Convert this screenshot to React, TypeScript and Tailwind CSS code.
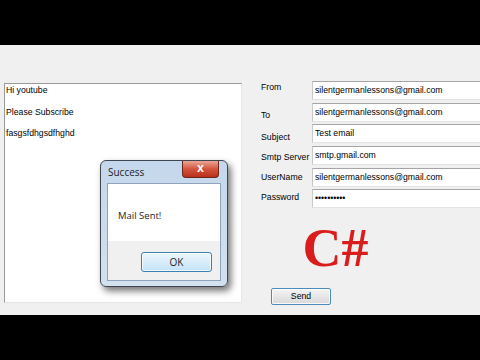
import React from 'react'

const fields = [
  { label: 'From', value: 'silentgermanlessons@gmail.com', mt: 'mt-0' },
  { label: 'To', value: 'silentgermanlessons@gmail.com', mt: 'mt-[6px]' },
  { label: 'Subject', value: 'Test email', mt: 'mt-[6.5px]' },
  { label: 'Smtp Server', value: 'smtp.gmail.com', mt: 'mt-[5px]' },
  { label: 'UserName', value: 'silentgermanlessons@gmail.com', mt: 'mt-[3.5px]' },
  { label: 'Password', value: '••••••••••', mt: 'mt-[2px]' },
]

function SuccessDialog() {
  return (
    <div className="absolute left-[100px] top-[115px] flex h-[127px] w-[128px] flex-col rounded-[6px] border border-[#3f4650] bg-gradient-to-b from-[#c4d7ec] to-[#d3e0ee] px-[6px] pb-[5px] shadow-[3px_4px_7px_rgba(0,0,0,0.55)]">
      <div className="relative h-[22px] shrink-0">
        <span className="absolute left-[1px] top-[5px] font-['Open_Sans',sans-serif] text-[10px] leading-[13px] text-[#1e1e1e]">Success</span>
        <div className="absolute right-[2px] top-0 flex h-[17px] w-[37px] items-center justify-center rounded-b-[4px] border border-t-0 border-[#6b2519] bg-gradient-to-b from-[#e9a592] via-[#d5533e] to-[#b9301c]">
          <span className="font-['DejaVu_Sans',sans-serif] text-[9px] font-bold leading-none text-white">X</span>
        </div>
      </div>
      <div className="flex flex-1 flex-col border border-[#8fa3bd]">
        <div className="flex h-[57px] items-center bg-white pl-[10px] pt-[6px]">
          <span className="font-['Open_Sans',sans-serif] text-[9.5px] leading-[13px] text-[#1e1e1e]">Mail Sent!</span>
        </div>
        <div className="flex flex-1 items-start justify-end bg-[#f0f0f0] pr-[8px] pt-[11px]">
          <div className="flex h-[20px] w-[71px] items-center justify-center rounded-[3px] border border-[#3c7fb1] bg-gradient-to-b from-[#ecf6fd] to-[#c4e3f7] shadow-[inset_0_0_0_1px_rgba(255,255,255,0.7)]">
            <span className="font-['Open_Sans',sans-serif] text-[10px] leading-none text-[#1e1e1e]">OK</span>
          </div>
        </div>
      </div>
    </div>
  )
}

export default function App() {
  return (
    <div className="flex h-[360px] w-[480px] flex-col bg-black font-['Liberation_Sans',Arial,sans-serif] text-[8.7px] text-black">
      <div className="h-[45px] shrink-0 bg-black" />
      <div className="relative flex h-[270px] shrink-0 overflow-hidden bg-[#f0f0f0]">
        <div className="pl-[4px] pt-[38px]">
          <div className="flex h-[220px] w-[238px] flex-col gap-[8.5px] border border-b-[#e6e6e6] border-l-[#9a9a9a] border-r-[#e6e6e6] border-t-[#9a9a9a] bg-white pl-[1px]">
            <div className="leading-[13px]">Hi youtube</div>
            <div className="leading-[13px]">Please Subscribe</div>
            <div className="leading-[13px]">fasgsfdhgsdfhghd</div>
          </div>
        </div>

        <div className="ml-[19px] flex flex-1 flex-col pt-[36px]">
          <div className="flex flex-col gap-[2.5px]">
            {fields.map((f) => (
              <div key={f.label} className="flex items-start">
                <div className={`w-[51px] shrink-0 whitespace-nowrap leading-[13px] ${f.mt}`}>{f.label}</div>
                <div className="flex h-[19px] w-[190px] shrink-0 items-center border border-b-[#e3e3e3] border-l-[#c9c9c9] border-r-[#e3e3e3] border-t-[#a5a5a5] bg-white pl-[2px] leading-[13px]">
                  {f.value}
                </div>
              </div>
            ))}
          </div>

          <div className="ml-[41.5px] mt-[13px] font-['Liberation_Serif','Times_New_Roman',serif] text-[54px] font-bold leading-[54px] text-[#d91c1c]">
            C#
          </div>

          <div className="ml-[10px] mt-[12.5px] flex h-[17px] w-[60px] items-center justify-center rounded-[2px] border border-[#4a8dbd] bg-gradient-to-b from-[#f4f4f4] to-[#d9d9d9] shadow-[inset_0_0_0_1px_rgba(255,255,255,0.8)]">
            <span className="leading-none">Send</span>
          </div>
        </div>

        <SuccessDialog />
      </div>
      <div className="h-[45px] shrink-0 bg-black" />
    </div>
  )
}
